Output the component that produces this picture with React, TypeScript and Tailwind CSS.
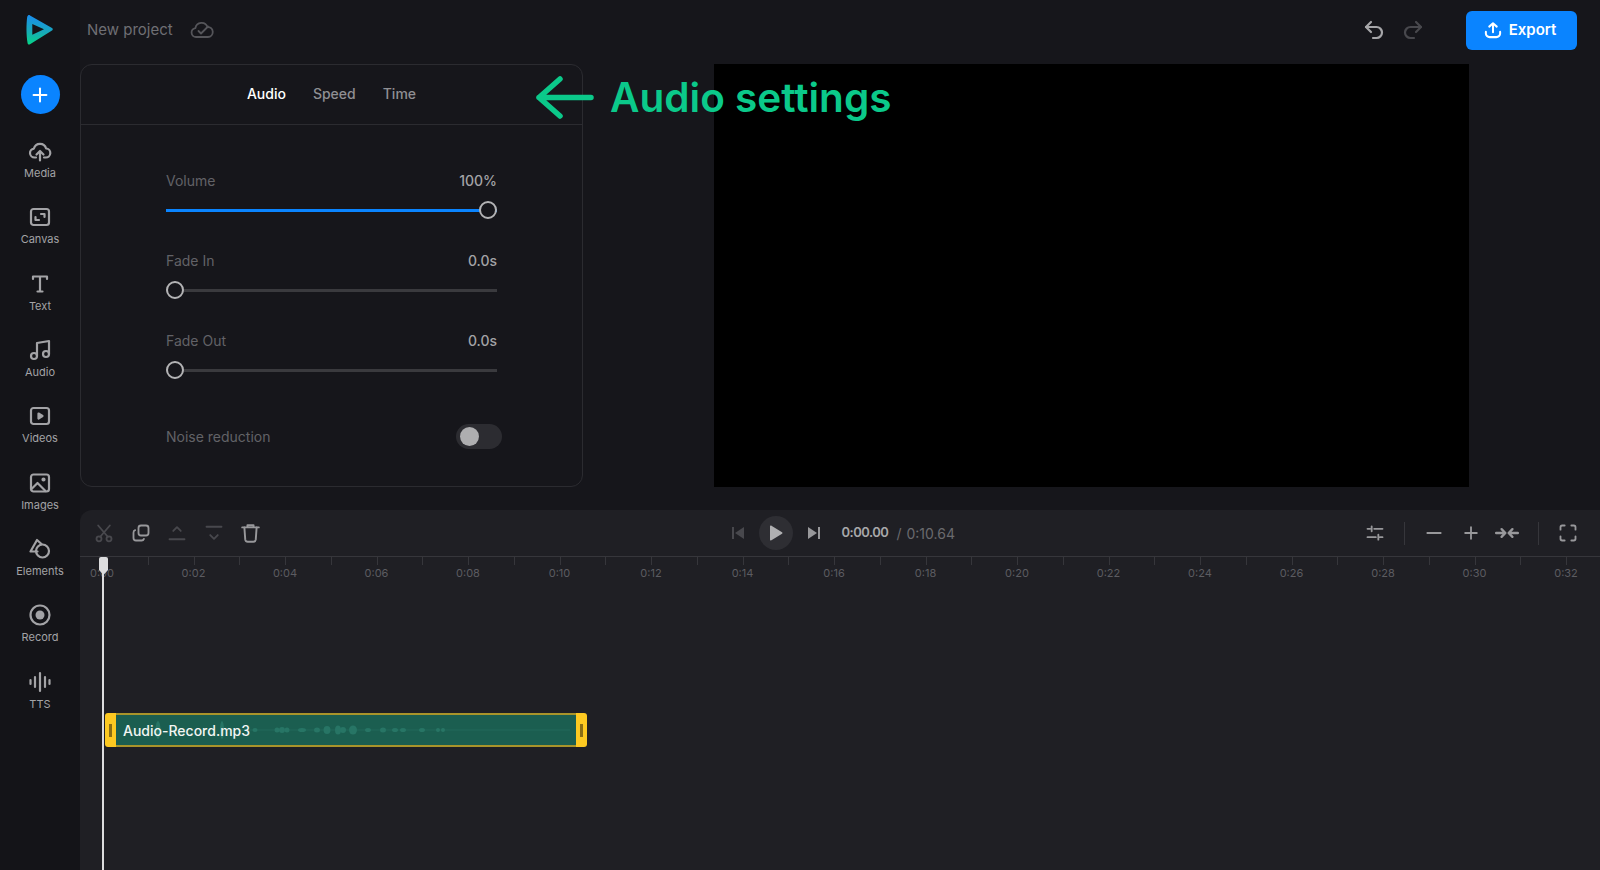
import { Music, Plus, Redo2, Undo2 } from 'lucide-react';
import type { ReactNode } from 'react';

const Ico = ({ children, size = 24, className = '' }: { children: ReactNode; size?: number; className?: string }) => (
  <svg
    width={size}
    height={size}
    viewBox="0 0 24 24"
    fill="none"
    stroke="currentColor"
    strokeWidth="2.2"
    strokeLinecap="round"
    strokeLinejoin="round"
    className={className}
  >
    {children}
  </svg>
);

const sideItems: { label: string; icon: ReactNode }[] = [
  {
    label: 'Media',
    icon: (
      <Ico>
        <path d="M8 18.500H6.500a4.500 4.500 0 0 1-.6-8.960A6.300 6.300 0 0 1 18.100 9.500a4.500 4.500 0 0 1-.6 9H16" />
        <path d="M12 21.500V12.500M8.500 15.500l3.500-3.500 3.500 3.500" />
      </Ico>
    ),
  },
  {
    label: 'Canvas',
    icon: (
      <Ico>
        <rect x="3" y="4" width="18" height="16" rx="2.500" />
        <path d="M13 9h3.500v3M11 15H7.500v-3" />
      </Ico>
    ),
  },
  {
    label: 'Text',
    icon: (
      <Ico>
        <path d="M5 7V4.500h14V7M12 4.500v15M9.500 19.500h5" />
      </Ico>
    ),
  },
  { label: 'Audio', icon: <Music size={24} strokeWidth={2.2} /> },
  {
    label: 'Videos',
    icon: (
      <Ico>
        <rect x="3" y="4" width="18" height="16" rx="2.500" />
        <path d="M10.500 9.500l4 2.500-4 2.500z" fill="currentColor" />
      </Ico>
    ),
  },
  {
    label: 'Images',
    icon: (
      <Ico>
        <rect x="3" y="3.500" width="18" height="17" rx="2.500" />
        <circle cx="15.500" cy="8.500" r="1" fill="currentColor" />
        <path d="M3.500 18l6-6 8 8" />
      </Ico>
    ),
  },
  {
    label: 'Elements',
    icon: (
      <Ico>
        <path d="M13.500 7L9 3L2.500 14.500H9.500" />
        <circle cx="14.500" cy="14" r="6.500" />
      </Ico>
    ),
  },
  {
    label: 'Record',
    icon: (
      <Ico>
        <circle cx="12" cy="12" r="9.500" />
        <circle cx="12" cy="12" r="4.500" fill="currentColor" stroke="none" />
      </Ico>
    ),
  },
  {
    label: 'TTS',
    icon: (
      <Ico>
        <path d="M2.500 10v4M7 7v10M12 3v18M17 7v10M21.500 10v4" />
      </Ico>
    ),
  },
];

const Sidebar = () => (
  <aside className="flex h-full w-20 flex-none flex-col items-center bg-[#141418]">
    <div className="flex h-16 w-full flex-none items-center justify-center pb-[4px] pr-[2px]">
      <svg width="30" height="32" viewBox="0 0 30 32">
        <defs>
          <linearGradient id="logo" x1="0.35" y1="0" x2="0.25" y2="1">
            <stop offset="0" stopColor="#1a8cf0" />
            <stop offset="0.55" stopColor="#18aab8" />
            <stop offset="1" stopColor="#06d488" />
          </linearGradient>
        </defs>
        <path
          fillRule="evenodd"
          fill="url(#logo)"
          d="M4 1.500C4.600 1 5.400 1 6 1.400L28 14c1 .7 1 1.900 0 2.500L6 30.200c-1 .6-2.200.2-2.400-1C2.200 21 2.200 10 3.200 3c.1-.6.3-1.100.8-1.500zM8.300 10v10.700l11.700-5.400z"
        />
      </svg>
    </div>
    <button className="mt-[11px] flex h-[39px] w-[39px] flex-none items-center justify-center rounded-full bg-[#0a84ff] text-white">
      <Plus size={22} strokeWidth={2.2} />
    </button>
    <nav className="mt-[11.500px] flex w-full flex-col">
      {sideItems.map((item) => (
        <div key={item.label} className="flex h-[66.33px] flex-col items-center justify-center text-[#a3a3a6]">
          <div className="flex h-[28px] items-center">{item.icon}</div>
          <span className="mt-[1px] text-[11px] leading-[14px]">{item.label}</span>
        </div>
      ))}
    </nav>
  </aside>
);

const TopBar = () => (
  <header className="flex h-16 flex-none items-center pl-[7px] pr-[23px] pb-[4px]">
    <span className="text-[15px] text-[#6f6f74]">New project</span>
    <svg
      width="24"
      height="24"
      viewBox="0 0 24 24"
      fill="none"
      stroke="#55555a"
      strokeWidth="1.800"
      strokeLinecap="round"
      strokeLinejoin="round"
      className="ml-[17px]"
    >
      <path d="M7.500 19H6a4.500 4.500 0 0 1-.6-8.950A6.300 6.300 0 0 1 17.500 9a5 5 0 0 1 .5 10H7.500z" />
      <path d="M8.500 13l2.500 2.500 7-7" />
    </svg>
    <div className="ml-auto flex items-center gap-[15px]">
      <Undo2 size={24} strokeWidth={2.2} className="text-[#a6a6a9]" />
      <Redo2 size={24} strokeWidth={2.2} className="text-[#48484d]" />
    </div>
    <button className="ml-[41px] flex h-[39px] w-[111px] items-center justify-center gap-[7px] rounded-md bg-[#0a84ff] pr-[3px] text-[15px] font-semibold text-white">
      <svg
        width="18"
        height="18"
        viewBox="0 0 24 24"
        fill="none"
        stroke="currentColor"
        strokeWidth="2.700"
        strokeLinecap="round"
        strokeLinejoin="round"
      >
        <path d="M12 15V3M7 7.500L12 3l5 4.500" />
        <path d="M2.500 14.500v2a5 5 0 0 0 5 5h9a5 5 0 0 0 5-5v-2" />
      </svg>
      Export
    </button>
  </header>
);

const Slider = ({ label, value, pct }: { label: string; value: string; pct: number }) => (
  <div className="h-[80px]">
    <div className="flex h-[20px] items-center justify-between text-[14px] text-[#626267]">
      <span>{label}</span>
      <span className="font-medium text-[#a3a3a6]">{value}</span>
    </div>
    <div className="relative mt-[10px] flex h-[20px] items-center">
      <div className="h-[3px] w-full bg-[#3a3a3e]" />
      {pct > 0 && <div className="absolute left-0 h-[3px] bg-[#0a84ff]" style={{ width: `${pct}%` }} />}
      <div
        className="absolute h-[18px] w-[18px] rounded-full border-2 border-[#b3b3b5] bg-[#16161b]"
        style={{ left: `calc(${pct}% - ${(pct / 100) * 18}px)` }}
      />
    </div>
  </div>
);

const AudioPanel = () => (
  <section className="flex h-[423px] w-[503px] flex-none flex-col rounded-xl border border-[#2b2b30]">
    <div className="flex h-[60px] flex-none items-center justify-center gap-[27px] border-b border-[#2b2b30] pb-[2px] text-[14px] font-medium text-[#8f8f93]">
      <span className="text-white">Audio</span>
      <span>Speed</span>
      <span>Time</span>
    </div>
    <div className="pl-[85px] pr-[85px] pt-[45px]">
      <Slider label="Volume" value="100%" pct={100} />
      <Slider label="Fade In" value="0.0s" pct={0} />
      <Slider label="Fade Out" value="0.0s" pct={0} />
      <div className="-mr-[5px] mt-[14px] flex h-[25px] items-center justify-between text-[14px] text-[#626267]">
        <span>Noise reduction</span>
        <div className="flex h-[25px] w-[46px] items-center rounded-full bg-[#2c2c31] pl-[4px]">
          <div className="h-[19px] w-[19px] rounded-full bg-[#aeaeb0]" />
        </div>
      </div>
    </div>
  </section>
);

const ToolIcon = ({ children, dim = false }: { children: ReactNode; dim?: boolean }) => (
  <div className={`flex h-9 w-[36.600px] items-center justify-center ${dim ? 'text-[#48484d]' : 'text-[#98989b]'}`}>
    {children}
  </div>
);

const Toolbar = () => (
  <div className="flex h-[47px] flex-none items-center border-b border-[#36363b] pl-[6px]">
    <div className="flex w-[645.500px] flex-none items-center">
      <ToolIcon dim>
        <Ico size={20}>
          <circle cx="6" cy="19" r="3" />
          <circle cx="18" cy="19" r="3" />
          <path d="M7.500 16.500L19 3M16.500 16.500L5 3" />
        </Ico>
      </ToolIcon>
      <ToolIcon>
        <Ico size={20}>
          <rect x="9" y="3" width="12" height="12" rx="3" />
          <path d="M5 8.500A3 3 0 0 0 3 11.500V18a3 3 0 0 0 3 3h6.500a3 3 0 0 0 3-2" />
        </Ico>
      </ToolIcon>
      <ToolIcon dim>
        <Ico size={20}>
          <path d="M7.500 9.500L12 5l4.500 4.500M3 19.500h18" />
        </Ico>
      </ToolIcon>
      <ToolIcon dim>
        <Ico size={20}>
          <path d="M7.500 14.500L12 19l4.500-4.500M3 4.500h18" />
        </Ico>
      </ToolIcon>
      <ToolIcon>
        <Ico size={21}>
          <path d="M2.500 5h19M8.500 5V2.500h7V5" />
          <path d="M5 5l1 14a3 3 0 0 0 3 2.500h6a3 3 0 0 0 3-2.500l1-14" />
        </Ico>
      </ToolIcon>
    </div>
    <svg width="13" height="14" viewBox="0 0 13 14" className="flex-none text-[#48484d]" fill="currentColor">
      <rect x="0" y="1" width="2" height="12" />
      <path d="M12 1v12L3 7z" />
    </svg>
    <button className="ml-[14px] flex h-[34px] w-[34px] flex-none items-center justify-center rounded-full bg-[#2e2e33] text-[#b0b0b2]">
      <svg width="14" height="16" viewBox="0 0 14 16" fill="currentColor">
        <path d="M1 1.500c0-.8.8-1.200 1.500-.8l10.500 6.500c.6.400.6 1.200 0 1.600L2.500 15.300c-.7.400-1.500 0-1.500-.8z" />
      </svg>
    </button>
    <svg width="13" height="14" viewBox="0 0 13 14" className="ml-[14px] flex-none text-[#98989b]" fill="currentColor">
      <path d="M1 1v12l9-6z" />
      <rect x="11" y="1" width="2" height="12" />
    </svg>
    <div className="ml-[22px] flex w-[130px] flex-none items-center text-[14px]">
      <span className="text-[13px] font-semibold tracking-[-0.500px] text-[#a8a8aa]">0:00.00</span>
      <span className="ml-[8px] text-[#6a6a6e]">/</span>
      <span className="ml-[5px] text-[#6a6a6e]">0:10.64</span>
    </div>
    <div className="ml-[391px] flex items-center text-[#98989b]">
      <div className="flex w-[24px] justify-center">
        <Ico size={20}>
          <path d="M3 7h3M11 7h10M8 4v6M3 17h10M21 17h-3M16 14v6" />
        </Ico>
      </div>
      <div className="mx-[17px] h-[23px] w-px bg-[#36363b]" />
      <div className="flex w-[24px] justify-center">
        <Ico size={20}>
          <path d="M4 12h16" />
        </Ico>
      </div>
      <div className="ml-[13px] flex w-[24px] justify-center">
        <Ico size={20}>
          <path d="M5 12h14M12 5v14" />
        </Ico>
      </div>
      <div className="ml-[10px] flex w-[28px] justify-center">
        <Ico size={26}>
          <path d="M2 12h8M7 8.500l3.500 3.500L7 15.500M22 12h-8M17 8.500L13.500 12l3.500 3.500" />
        </Ico>
      </div>
      <div className="mx-[17px] h-[23px] w-px bg-[#36363b]" />
      <div className="flex w-[24px] justify-center">
        <Ico size={20}>
          <path d="M3 8V5a2 2 0 0 1 2-2h3M16 3h3a2 2 0 0 1 2 2v3M21 16v3a2 2 0 0 1-2 2h-3M8 21H5a2 2 0 0 1-2-2v-3" />
        </Ico>
      </div>
    </div>
  </div>
);

const marks = Array.from({ length: 17 }, (_, i) => `0:${String(i * 2).padStart(2, '0')}`);

const Ruler = () => (
  <div className="flex h-[34px] flex-none overflow-hidden pl-[22px]">
    {marks.map((m) => (
      <div key={m} className="flex w-[91.500px] flex-none flex-col">
        <div className="flex h-[8px]">
          <div className="h-full w-[45.750px] border-l border-[#36363b]" />
          <div className="h-full w-[45.750px] border-l border-[#36363b]" />
        </div>
        <span className="-ml-[30px] mt-[1px] w-[60px] text-center text-[11px] leading-[14px] text-[#5c5c61]">{m}</span>
      </div>
    ))}
  </div>
);

const blobs: [number, number, number][] = [
  [158, 2.500, 9], [222, 2, 9], [255, 2.500, 2], [277, 2.500, 2.500], [282, 3, 3], [287, 2.500, 2.500], [302, 4, 2],
  [317, 3, 2.500], [327, 3.500, 4], [338, 3, 4.500], [343, 3, 3], [353, 4, 4.500], [368, 3, 2], [383, 3, 2.500],
  [395, 3, 2], [403, 3, 2], [422, 3, 2], [438, 2, 2], [443, 2, 2],
];

const Clip = () => (
  <div className="ml-[25px] mt-[122px] flex h-[34px] w-[482px] flex-none overflow-hidden rounded-[3px]">
    <div className="flex w-[11px] flex-none items-center justify-center bg-[#fdc921]">
      <div className="h-[13px] w-[3px] bg-[#8a6d14]" />
    </div>
    <div className="relative flex flex-1 items-center border-y-2 border-[#a8942a] bg-[#1b5e50] pl-[7px] text-[14px] font-medium text-[#f1f5f3]">
      <svg width="460" height="30" viewBox="116 0 460 30" className="absolute left-0 top-0 text-[#277565]" fill="currentColor">
        <rect x="240" y="14.500" width="330" height="1" opacity="0.5" />
        {blobs.map(([x, rx, ry]) => (
          <ellipse key={x} cx={x} cy="15" rx={rx} ry={ry} />
        ))}
      </svg>
      <span className="relative">Audio-Record.mp3</span>
    </div>
    <div className="flex w-[11px] flex-none items-center justify-center bg-[#fdc921]">
      <div className="h-[13px] w-[3px] bg-[#8a6d14]" />
    </div>
  </div>
);

const Timeline = () => (
  <section className="relative flex min-h-0 flex-1 flex-col overflow-hidden rounded-tl-xl bg-[#1f1f24]">
    <Toolbar />
    <Ruler />
    <Clip />
    {/* playhead */}
    <div className="absolute bottom-0 left-[22px] top-[47px] w-[2px] bg-[#dcdcde]" />
    <svg width="9" height="18" viewBox="0 0 9 18" className="absolute left-[18.500px] top-[47px] text-[#dcdcde]" fill="currentColor">
      <path d="M0 2a2 2 0 0 1 2-2h5a2 2 0 0 1 2 2v11l-4.500 5L0 13z" />
    </svg>
  </section>
);

export default function App() {
  return (
    <div className="relative flex h-[870px] w-[1600px] overflow-hidden bg-[#16161b] font-['Inter',sans-serif]">
      <Sidebar />
      <main className="flex min-w-0 flex-1 flex-col">
        <TopBar />
        <div className="flex flex-none">
          <AudioPanel />
          <div className="ml-[131px] h-[423px] w-[755px] flex-none bg-black" />
        </div>
        <div className="h-[23px] flex-none" />
        <Timeline />
      </main>
      {/* annotation over the editor */}
      <div className="absolute left-[535px] top-[70px] flex items-center text-[#0bc98a]">
        <svg
          width="60"
          height="44"
          viewBox="0 0 60 44"
          fill="none"
          stroke="currentColor"
          strokeWidth="5.500"
          strokeLinecap="round"
          strokeLinejoin="round"
        >
          <path d="M56 21.500H4M25 3L4 21.500l21 18.500" />
        </svg>
        <span className="ml-[15px] text-[40.500px] font-semibold leading-[56px]">Audio settings</span>
      </div>
    </div>
  );
}
